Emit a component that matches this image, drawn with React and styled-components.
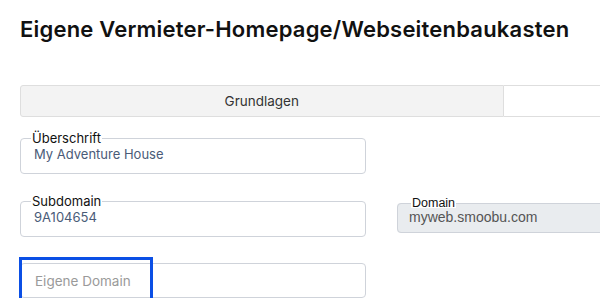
import React from 'react'
import styled, { createGlobalStyle } from 'styled-components'

const GlobalStyle = createGlobalStyle`
  html, body {
    margin: 0;
    padding: 0;
    background: #fff;
    overflow: hidden;
  }
  body {
    font-family: Inter, 'Noto Sans', sans-serif;
    color: #111;
  }
`

const Page = styled.div`
  padding: 17px 0 0 20px;
  width: 1200px;
`

const Title = styled.h1`
  margin: 0;
  font-size: 22px;
  line-height: 25px;
  font-weight: 600;
  color: #111;
  letter-spacing: 0.2px;
`

const Tabs = styled.div`
  display: flex;
  width: 966px;
  margin-top: 43px;
`

const Tab = styled.div`
  flex: 1;
  height: 32px;
  box-sizing: border-box;
  display: flex;
  align-items: center;
  justify-content: center;
  font-size: 13.5px;
  color: #333;
  border: 1px solid #dedede;
  background: ${p => (p.$active ? '#f3f3f3' : '#fff')};
  border-radius: ${p => (p.$active ? '3px 0 0 3px' : '0')};
  border-left: ${p => (p.$active ? '1px solid #dedede' : 'none')};
`

const Form = styled.div`
  display: flex;
  flex-direction: column;
  margin-top: 15px;
`

const Row = styled.div`
  display: flex;
  gap: 31px;
  align-items: flex-start;
  margin-bottom: ${p => p.$gap || 0}px;
`

const Field = styled.fieldset`
  margin: 0;
  width: 346px;
  box-sizing: border-box;
  border: 1px solid #cfd3da;
  border-radius: 4px;
  padding: 0 12px 11px 13px;
  min-width: 0;
`

const Legend = styled.legend`
  font-size: 13px;
  line-height: 13px;
  padding: 0 1px;
  margin-left: -3px;
  color: #111;
`

const Value = styled.div`
  font-size: 13px;
  line-height: 16px;
  margin-top: 1px;
  color: #4a5b78;
`

const Disabled = styled.fieldset`
  margin: 3px 0 0;
  width: 346px;
  box-sizing: border-box;
  border: 1px solid #cfd3da;
  border-radius: 4px;
  background: #e9ecef;
  padding: 0 12px 6px 11px;
  font-family: 'Liberation Sans', Arial, sans-serif;
  min-width: 0;
`

const DisabledLegend = styled.legend`
  font-size: 12.5px;
  line-height: 10px;
  padding: 0 1px;
  margin-left: 2px;
  background: #fff;
  color: #111;
`

const DisabledValue = styled.div`
  font-size: 14px;
  line-height: 17px;
  margin-top: 1px;
  color: #555;
`

const InputWrap = styled.div`
  position: relative;
  width: 346px;
`

const Input = styled.input`
  display: block;
  width: 346px;
  height: 35px;
  box-sizing: border-box;
  border: 1px solid #cfd3da;
  border-radius: 4px;
  padding: 0 14px;
  font-family: Inter, 'Noto Sans', sans-serif;
  font-size: 13.5px;
  color: #333;
  outline: none;

  &::placeholder {
    color: #9a9a9a;
  }
`

const FocusRing = styled.span`
  position: absolute;
  left: -1px;
  top: -6px;
  width: 134px;
  height: 44px;
  box-sizing: border-box;
  border: 3px solid #0b4fe5;
  pointer-events: none;
`

export default function App() {
  return (
    <>
      <GlobalStyle />
      <Page>
        <Title>Eigene Vermieter-Homepage/Webseitenbaukasten</Title>
        <Tabs>
          <Tab $active>Grundlagen</Tab>
          <Tab></Tab>
        </Tabs>
        <Form>
          <Row $gap={21}>
            <Field>
              <Legend>Überschrift</Legend>
              <Value>My Adventure House</Value>
            </Field>
          </Row>
          <Row $gap={26}>
            <Field>
              <Legend>Subdomain</Legend>
              <Value>9A104654</Value>
            </Field>
            <Disabled>
              <DisabledLegend>Domain</DisabledLegend>
              <DisabledValue>myweb.smoobu.com</DisabledValue>
            </Disabled>
          </Row>
          <Row>
            <InputWrap>
              <Input placeholder="Eigene Domain" />
              <FocusRing />
            </InputWrap>
          </Row>
        </Form>
      </Page>
    </>
  )
}
